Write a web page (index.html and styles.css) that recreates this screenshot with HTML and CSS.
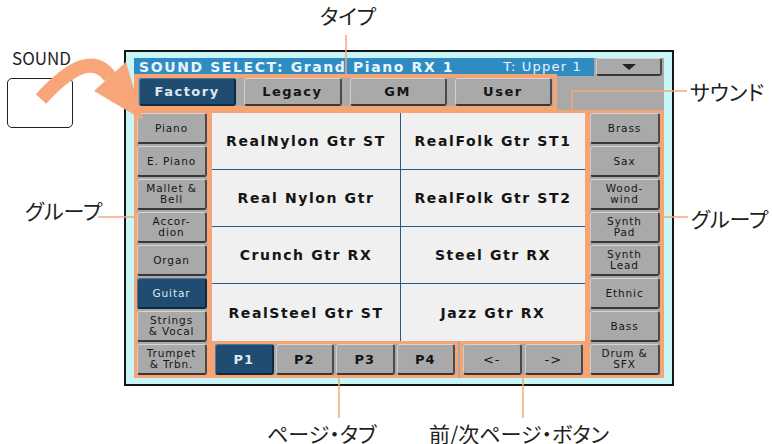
FILE: index.html
```html
<!DOCTYPE html>
<html lang="ja">
<head>
<meta charset="utf-8">
<link rel="stylesheet" href="styles.css">
</head>
<body>
<div class="canvas">
  <div class="device">
    <div class="screen">
      <div class="titlebar">
        <div class="title-main"><span>SOUND SELECT: Grand Piano RX 1</span><span class="track">T: Upper 1</span></div>
        <div class="dropdown btn"><span class="tri"></span></div>
      </div>
      <div class="tabrow">
        <div class="tabs frame">
          <div class="btn tab sel">Factory</div>
          <div class="btn tab">Legacy</div>
          <div class="btn tab">GM</div>
          <div class="btn tab">User</div>
        </div>
      </div>
      <div class="main">
        <div class="groups left frame">
          <div class="btn grp">Piano</div>
          <div class="btn grp">E. Piano</div>
          <div class="btn grp">Mallet &amp;<br>Bell</div>
          <div class="btn grp">Accor-<br>dion</div>
          <div class="btn grp">Organ</div>
          <div class="btn grp sel">Guitar</div>
          <div class="btn grp">Strings<br>&amp; Vocal</div>
          <div class="btn grp">Trumpet<br>&amp; Trbn.</div>
        </div>
        <div class="center">
          <div class="sounds">
            <div class="cell">RealNylon Gtr ST</div>
            <div class="cell col2">RealFolk Gtr ST1</div>
            <div class="cell">Real Nylon Gtr</div>
            <div class="cell col2">RealFolk Gtr ST2</div>
            <div class="cell">Crunch Gtr RX</div>
            <div class="cell col2">Steel Gtr RX</div>
            <div class="cell last">RealSteel Gtr ST</div>
            <div class="cell col2 last">Jazz Gtr RX</div>
          </div>
          <div class="bottom">
            <div class="pages frame">
              <div class="btn pg sel">P1</div>
              <div class="btn pg">P2</div>
              <div class="btn pg">P3</div>
              <div class="btn pg">P4</div>
            </div>
            <div class="nav frame">
              <div class="btn navb">&lt;-</div>
              <div class="btn navb">-&gt;</div>
            </div>
          </div>
        </div>
        <div class="groups right frame">
          <div class="btn grp">Brass</div>
          <div class="btn grp">Sax</div>
          <div class="btn grp">Wood-<br>wind</div>
          <div class="btn grp">Synth<br>Pad</div>
          <div class="btn grp">Synth<br>Lead</div>
          <div class="btn grp">Ethnic</div>
          <div class="btn grp">Bass</div>
          <div class="btn grp">Drum &amp;<br>SFX</div>
        </div>
      </div>
    </div>
  </div>

  <div class="sound-label">SOUND</div>
  <div class="sound-key"></div>

  <svg class="overlay" width="772" height="444" viewBox="0 0 772 444">
    <path d="M41 99 Q89 46 110 77" fill="none" stroke="#f8a679" stroke-width="14"/>
    <polygon points="126,62 94,91 143,120" fill="#f8a679"/>
    <g stroke="#f6a57b" stroke-width="1.5" fill="none">
      <line x1="346" y1="35" x2="346" y2="76"/>
      <polyline points="687,91 572,91 572,112"/>
      <line x1="98" y1="217" x2="134" y2="217"/>
      <line x1="664" y1="217" x2="688" y2="217"/>
      <line x1="339" y1="378" x2="339" y2="418"/>
      <line x1="523" y1="378" x2="523" y2="418"/>
    </g>
  </svg>

  <div class="jp l-type">タイプ</div>
  <div class="jp l-sound">サウンド</div>
  <div class="jp l-group-l">グループ</div>
  <div class="jp l-group-r">グループ</div>
  <div class="jp l-page">ページ・タブ</div>
  <div class="jp l-nav">前/次ページ・ボタン</div>
</div>
</body>
</html>
```

FILE: styles.css
```css
* { box-sizing: border-box; }
html, body { margin: 0; padding: 0; background: #fff; }
.canvas {
  position: relative;
  width: 772px;
  height: 444px;
  overflow: hidden;
  padding: 50px 0 0 124px;
  font-family: "DejaVu Sans", sans-serif;
}
.device {
  width: 550px;
  height: 336px;
  border: 2px solid #151515;
  background: #c9f5f7;
  padding: 6px 8px;
}
.screen {
  width: 530px;
  height: 320px;
  background: #a9a9a9;
  display: flex;
  flex-direction: column;
}
.titlebar {
  height: 18px;
  display: flex;
}
.title-main {
  flex: 1;
  background: #2e8cc3;
  color: #eaf4fb;
  font-weight: bold;
  font-size: 14px;
  letter-spacing: 1.6px;
  line-height: 18px;
  padding: 0 12px 0 5px;
  display: flex;
  justify-content: space-between;
  white-space: nowrap;
}
.title-main .track {
  font-weight: normal;
  font-size: 13px;
  letter-spacing: 1.2px;
}
.btn {
  background: #a9a9a9;
  border-radius: 3px;
  border-top: 1px solid #d6d6d6;
  border-left: 1px solid #cdcdcd;
  border-right: 2px solid #4a4a4a;
  border-bottom: 2px solid #383838;
  color: #151515;
  display: flex;
  align-items: center;
  justify-content: center;
  text-align: center;
  white-space: nowrap;
}
.btn.sel {
  background: #1f4c70;
  border-color: #4f7896 #0c2a42 #0c2a42 #4f7896;
  color: #dfe8f0;
}
.dropdown {
  width: 66px;
  margin: 0 2px 0 2px;
}
.tri {
  width: 0;
  height: 0;
  border-left: 7px solid transparent;
  border-right: 7px solid transparent;
  border-top: 6px solid #222;
}
.frame { border: 3px solid #f7a474; }
.tabrow {
  height: 34px;
  display: flex;
}
.tabs {
  width: 423px;
  border-width: 4px;
  display: flex;
  gap: 8px;
  padding: 0 1px;
  margin-top: -2px;
}
.tab {
  flex: 1;
  font-weight: bold;
  font-size: 13px;
  letter-spacing: 1.5px;
}
.main {
  height: 268px;
  display: flex;
}
.groups {
  display: flex;
  flex-direction: column;
  gap: 2px;
}
.groups.left { width: 78px; border-right-width: 5px; }
.groups.right { width: 79px; border-left-width: 5px; border-right-width: 4px; }
.grp {
  flex: 1;
  font-size: 10.5px;
  letter-spacing: 0.9px;
  line-height: 11px;
}
.center {
  width: 373px;
  display: flex;
  flex-direction: column;
}
.sounds {
  flex: 1;
  border-top: 3px solid #f7a474;
  background: #f0f0f0;
  display: grid;
  grid-template-columns: 188px 1fr;
  grid-template-rows: repeat(4, 1fr);
}
.cell {
  display: flex;
  align-items: center;
  justify-content: center;
  font-weight: bold;
  font-size: 14px;
  letter-spacing: 1.6px;
  color: #141414;
  border-bottom: 1px solid #2c5a88;
  white-space: nowrap;
}
.cell.col2 { border-left: 1px solid #2c5a88; }
.cell.last { border-bottom: none; }
.bottom {
  height: 37px;
  display: flex;
  gap: 2px;
}
.pages {
  width: 246px;
  display: flex;
  gap: 2px;
}
.pg {
  flex: 1;
  font-weight: bold;
  font-size: 13px;
  letter-spacing: 1px;
}
.nav {
  flex: 1;
  display: flex;
  gap: 3px;
  border-right-width: 2px;
}
.navb {
  flex: 1;
  font-size: 13px;
  letter-spacing: 1px;
}
.sound-label {
  position: absolute;
  left: 12px;
  top: 48px;
  font-family: "Noto Sans CJK JP", "Noto Sans", sans-serif;
  font-size: 17px;
  line-height: 20px;
  color: #1e1e1e;
}
.sound-key {
  position: absolute;
  left: 7px;
  top: 78px;
  width: 66px;
  height: 50px;
  border: 1.5px solid #222;
  border-radius: 5px;
}
.overlay {
  position: absolute;
  left: 0;
  top: 0;
  pointer-events: none;
}
.jp {
  position: absolute;
  font-family: "Noto Sans CJK JP", sans-serif;
  font-size: 21px;
  line-height: 22px;
  color: #231f20;
  white-space: nowrap;
  font-feature-settings: "palt";
}
.l-type { left: 320px; top: 4px; }
.l-sound { left: 690px; top: 80px; }
.l-group-l { left: 25px; top: 199px; }
.l-group-r { left: 691px; top: 207px; }
.l-page { left: 267px; top: 422px; }
.l-nav { left: 429px; top: 422px; }
```
